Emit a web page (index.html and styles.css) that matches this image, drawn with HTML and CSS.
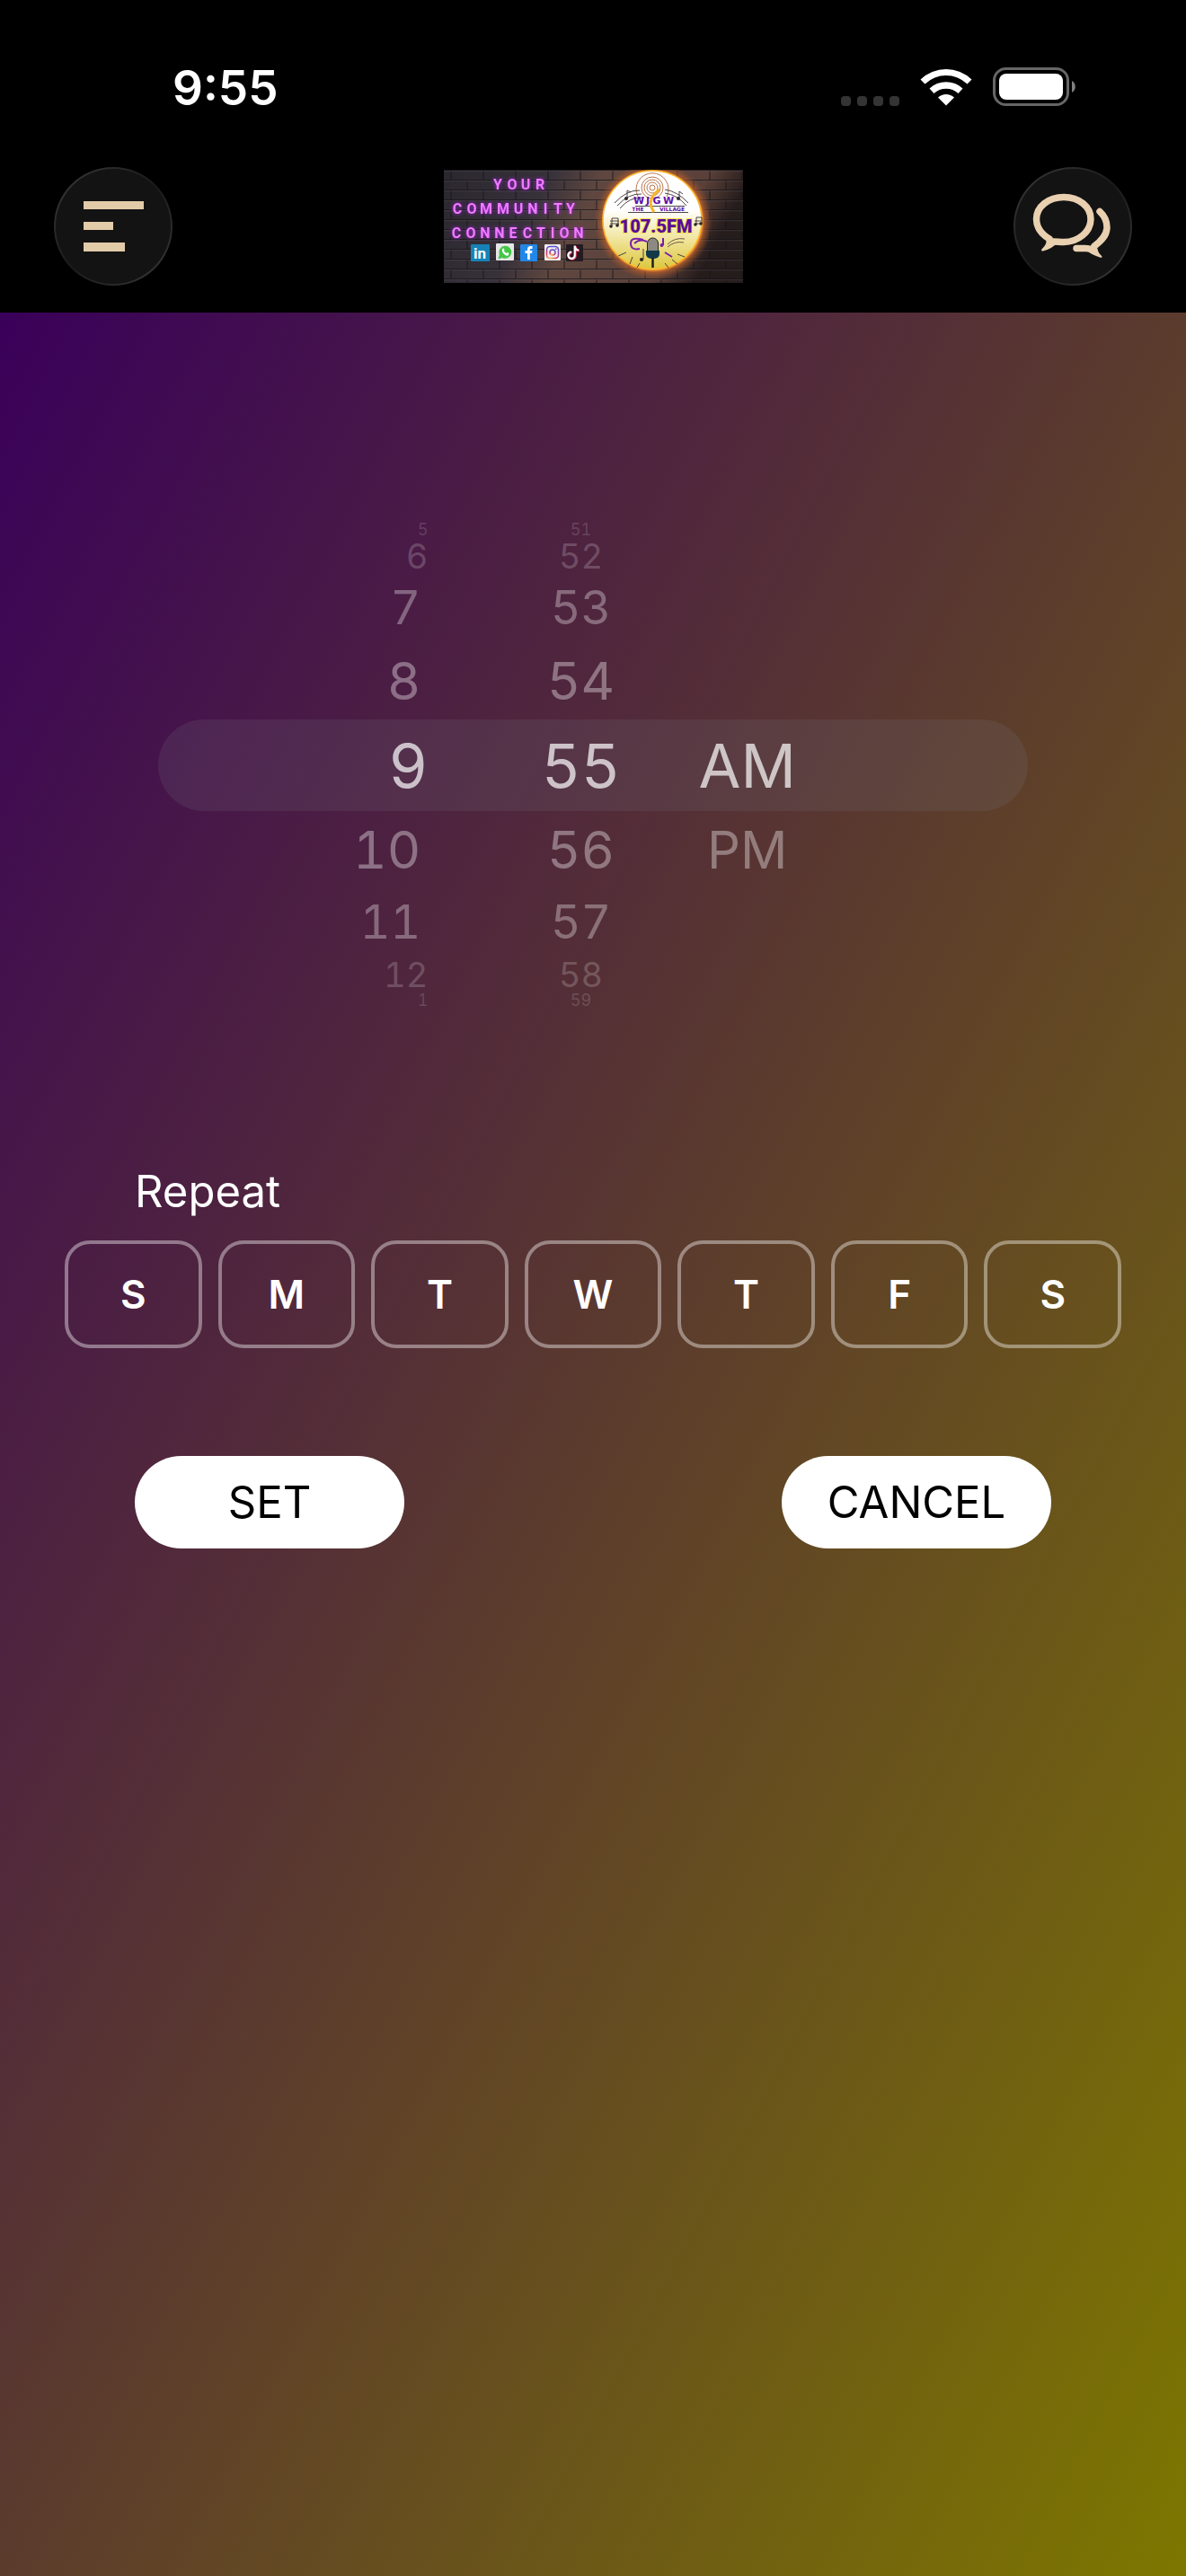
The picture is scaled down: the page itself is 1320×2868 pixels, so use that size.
FILE: index.html
```html
<!DOCTYPE html>
<html lang="en">
<head>
<meta charset="utf-8">
<meta name="viewport" content="width=device-width, initial-scale=1">
<title>Set alarm</title>
<link rel="stylesheet" href="styles.css">
</head>
<body>
<header class="header">
  <div class="status">
    <time class="status-time">9:55</time>
    <div class="status-icons">
      <span class="signal"><i></i><i></i><i></i><i></i></span>
      <svg class="wifi" viewBox="0 0 58 43" aria-hidden="true">
        <path d="M0.500 13.500A41 41 0 0 1 57.500 13.500L52.500 18.500A34 34 0 0 0 5.500 18.500Z"/>
        <path d="M10.500 23.500A27 27 0 0 1 47.500 23.500L42.500 29A20 20 0 0 0 15.500 29Z"/>
        <path d="M20 33.500A13 13 0 0 1 38 33.500L29 42.500Z"/>
      </svg>
      <svg class="battery" viewBox="0 0 94 43" aria-hidden="true">
        <rect x="1.500" y="1.500" width="82" height="40" rx="13" fill="none" stroke="#666" stroke-width="3"/>
        <rect x="7" y="7" width="71" height="29" rx="8" fill="#fff"/>
        <path d="M88 15A7.500 7.500 0 0 1 88 28Z" fill="#808080"/>
      </svg>
    </div>
  </div>
  <nav class="navbar">
    <button class="round" type="button" aria-label="Menu">
      <svg viewBox="0 0 132 132" aria-hidden="true">
        <g fill="#e2cba9"><rect x="33" y="38" width="67" height="9"/><rect x="33" y="61" width="33" height="9"/><rect x="33" y="84" width="46" height="10"/></g>
      </svg>
    </button>
    <svg class="logo" viewBox="0 0 333 126" role="img" aria-label="WJGW The Village 107.5 FM">
      <defs>
        <linearGradient id="wall" x1="0" x2="1" y1="0" y2="0.200">
          <stop offset="0" stop-color="#2a272e"/><stop offset="0.350" stop-color="#37313a"/><stop offset="0.520" stop-color="#5f473f"/><stop offset="0.860" stop-color="#5a4038"/><stop offset="1" stop-color="#251c1c"/>
        </linearGradient>
        <pattern id="bricks" width="36" height="22" patternUnits="userSpaceOnUse">
          <path d="M0 0.500H36M0 11.500H36M8 0V11M26 11V22" stroke="#151318" stroke-width="1.200" fill="none"/>
          <path d="M0 1.700H36M0 12.700H36" stroke="#5a5258" stroke-width="0.500" fill="none"/>
        </pattern>
        <radialGradient id="halo"><stop offset="0.820" stop-color="#ff9d2e"/><stop offset="0.870" stop-color="#c9662a" stop-opacity="0.600"/><stop offset="1" stop-color="#9c4f2c" stop-opacity="0"/></radialGradient>
        <linearGradient id="disc" x1="0" x2="0" y1="0" y2="1"><stop offset="0.400" stop-color="#fff"/><stop offset="0.700" stop-color="#f0e49a"/><stop offset="1" stop-color="#dcc63c"/></linearGradient>
        <radialGradient id="insta" cx="0.300" cy="1" r="1"><stop offset="0" stop-color="#fdc04a"/><stop offset="0.500" stop-color="#e0356c"/><stop offset="1" stop-color="#5a4fd0"/></radialGradient>
      </defs>
      <rect width="333" height="126" fill="url(#wall)"/>
      <rect width="333" height="126" fill="url(#bricks)" opacity="0.700"/>
      <g class="neon">
        <text x="60 76 91 107" y="22">YOUR</text>
        <text x="15 31 47 66 83 99 113 127 141" y="49">COMMUNITY</text>
        <text x="14 30 46 62 77 93 108 121 134 150" y="76">CONNECTION</text>
      </g>
      <rect x="30" y="83" width="21" height="19" rx="1" fill="#1583b7"/>
      <text class="linked" x="40" y="99">in</text>
      <rect x="58" y="82" width="20" height="19" rx="1" fill="#e6e6e6"/>
      <path d="M60.500 99.500L61.800 94.500A7 7 0 1 1 65 98Z" fill="#43c745"/>
      <path d="M65 88Q64 91 67 94T72 95L72.500 93L70.500 92L69.500 93L66.800 90.500L67.500 89.500L66.800 87.500Z" fill="#fff"/>
      <rect x="85" y="83" width="19" height="19" rx="1" fill="#2187e8"/>
      <path d="M93 100V93H90.500V90H93V88.500Q93 85 96.500 85H98.500V88H97Q95.800 88 95.800 89V90H98.500L98 93H95.800V100Z" fill="#fff"/>
      <rect x="112" y="83" width="18" height="18" rx="1" fill="#eee"/>
      <g fill="none" stroke="url(#insta)" stroke-width="1.600"><rect x="114.500" y="85.500" width="13" height="13" rx="3.500"/><circle cx="121" cy="92" r="3"/></g>
      <circle cx="124.800" cy="88.200" r="0.900" fill="#b03ab0"/>
      <rect x="136" y="83" width="19" height="19" rx="1" fill="#251a22"/>
      <path d="M146.500 85V95.500A3.700 3.700 0 1 1 142.800 92M146.500 86Q147.500 90 151 90" fill="none" stroke="#f0345c" stroke-width="2.600"/>
      <path d="M145.700 84.500V95A3.700 3.700 0 1 1 142 91.500M145.700 85.500Q146.500 89.500 150 89.500" fill="none" stroke="#fff" stroke-width="2.200"/>
      <circle cx="233" cy="57" r="66" fill="url(#halo)"/>
      <circle cx="232" cy="56" r="55" fill="url(#disc)" stroke="#ffb52e" stroke-width="1.500"/>
      <g fill="none" stroke="#b9784f" stroke-width="1">
        <circle cx="232" cy="20" r="3"/><circle cx="232" cy="20" r="6"/><circle cx="232" cy="20" r="9"/><circle cx="232" cy="20" r="12"/><path d="M216 30A18 18 0 1 1 248 30"/>
      </g>
      <g fill="none" stroke="#3a3232" stroke-width="0.900">
        <path d="M190 37Q204 22 218 23M193 40Q206 26 220 27M196 43Q207 30 221 31M246 22Q260 24 272 37M246 26Q260 28 270 40"/>
        <path d="M204 32V23L208 25M262 32V24L266 27M187 63V54H194V62M185 57H195M185 60H195M281 61V53H287V60M279 57H286M279 60H286"/>
        <path d="M213 40.500H268M205 47.500H272M210 97L207 105M218 104L215 109M246 104L250 109M254 100L260 105M260 94L268 97M203 92L194 96M222 88V100"/>
      </g>
      <g fill="#2c2424"><circle cx="203" cy="32" r="2"/><circle cx="261" cy="32" r="2"/><circle cx="186" cy="63" r="1.800"/><circle cx="193" cy="62" r="1.800"/><circle cx="280" cy="61" r="1.800"/><circle cx="286" cy="60" r="1.800"/><circle cx="220" cy="100" r="2"/></g>
      <path d="M240 22Q224 34 234 47" fill="none" stroke="#f5b62b" stroke-width="3"/>
      <text class="call" x="217 227 237 250" y="38">WJGW</text>
      <text class="village" y="46"><tspan x="217">THE</tspan> <tspan x="254">VILLAGE</tspan></text>
      <text class="freq" x="236" y="70">107.5FM</text>
      <path d="M222 78Q208 74 208 82T218 88M244 76V84M246 92L254 97M212 82Q218 76 226 80" fill="none" stroke="#7a1fa8" stroke-width="2"/>
      <circle cx="242.500" cy="84" r="2" fill="#7a1fa8"/>
      <path d="M249 83Q257 75 268 77M249 86Q257 79 267 81" fill="none" stroke="#5c4c3c" stroke-width="0.900"/>
      <rect x="226.500" y="76" width="12" height="19" rx="6" fill="#8c8983" stroke="#222" stroke-width="1"/>
      <path d="M225 90H240V94Q240 99 232.500 99T225 94Z" fill="#133a48"/>
      <path d="M232.500 98V109" stroke="#17191c" stroke-width="2.400"/>
    </svg>
    <button class="round" type="button" aria-label="Chat">
      <svg viewBox="0 0 132 132" fill="none" stroke="#e8d0b0" stroke-width="7.500" stroke-linecap="round" stroke-linejoin="round" aria-hidden="true">
        <path d="M40 80C30 74 25.500 67 25.500 58C25.500 44 39 33.500 56 33.500C73 33.500 86 44 86 58C86 72 72 83.500 56 83.500C51 83.500 47 82.500 43 83"/>
        <path d="M36 76Q39 85 31 92Q31 94 33 93.500Q43 91 49 84L40 78Z" fill="#e8d0b0" stroke="none"/>
        <path d="M96 49.500C102 55 104 60 104 67C104 76 98 82 90 88M70 90.500H80C85 90.500 87 92 90 93"/>
        <path d="M86 88L93 82Q91 93 98.500 99.500Q99 101.500 96 100.500Q86 97.500 81 92Z" fill="#e8d0b0" stroke="none"/>
      </svg>
    </button>
  </nav>
</header>
<main class="screen">
  <section class="picker" aria-label="Alarm time">
    <ul class="wheel hours" role="listbox" aria-label="Hour">
      <li class="far4">5</li><li class="far3">6</li><li class="far2">7</li><li class="far1">8</li>
      <li class="current" role="option" aria-selected="true">9</li>
      <li class="far1">10</li><li class="far2">11</li><li class="far3">12</li><li class="far4">1</li>
    </ul>
    <ul class="wheel minutes" role="listbox" aria-label="Minute">
      <li class="far4">51</li><li class="far3">52</li><li class="far2">53</li><li class="far1">54</li>
      <li class="current" role="option" aria-selected="true">55</li>
      <li class="far1">56</li><li class="far2">57</li><li class="far3">58</li><li class="far4">59</li>
    </ul>
    <ul class="wheel period" role="listbox" aria-label="AM or PM">
      <li class="current" role="option" aria-selected="true">AM</li>
      <li class="far1">PM</li>
    </ul>
  </section>
  <section class="repeat" aria-labelledby="repeat-title">
    <h2 class="repeat-title" id="repeat-title">Repeat</h2>
    <div class="days">
      <button class="day" type="button" aria-label="Sunday">S</button>
      <button class="day" type="button" aria-label="Monday">M</button>
      <button class="day" type="button" aria-label="Tuesday">T</button>
      <button class="day" type="button" aria-label="Wednesday">W</button>
      <button class="day" type="button" aria-label="Thursday">T</button>
      <button class="day" type="button" aria-label="Friday">F</button>
      <button class="day" type="button" aria-label="Saturday">S</button>
    </div>
  </section>
  <div class="actions">
    <button class="pill" type="button">SET</button>
    <button class="pill" type="button">CANCEL</button>
  </div>
</main>
</body>
</html>
```
FILE: styles.css
```css
* { box-sizing: border-box; }

body {
  margin: 0;
  min-height: 100vh;
  display: flex;
  flex-direction: column;
  background: #000;
  color: #fff;
  font-family: Inter, "Liberation Sans", sans-serif;
}

button {
  margin: 0;
  padding: 0;
  border: 0;
  font: inherit;
  color: inherit;
  background: none;
}

/* Status bar and navigation */
.header { padding: 66px 60px 30px; }

.status {
  display: flex;
  justify-content: space-between;
  align-items: center;
  height: 64px;
  padding: 0 61px 0 132px;
}

.status-time { font-size: 53px; font-weight: 600; line-height: 64px; }

.status-icons { display: flex; align-items: center; gap: 23px; padding-bottom: 3px; }

.signal { display: flex; gap: 7px; align-self: flex-end; }
.signal i { width: 11px; height: 11px; border-radius: 4px; background: #343434; }
.wifi { width: 58px; height: 43px; fill: #fff; }
.battery { width: 94px; height: 43px; }

.navbar {
  display: flex;
  justify-content: space-between;
  align-items: center;
  margin-top: 56px;
}

.round {
  width: 132px;
  height: 132px;
  border: 2px solid transparent;
  border-radius: 50%;
  background:
    linear-gradient(#131313, #131313) padding-box,
    linear-gradient(135deg, #3a3a3a, #1a1a1a 50%, #3a3a3a) border-box;
}
.round svg { display: block; margin: -2px; width: 132px; height: 132px; }

.logo { width: 333px; height: 126px; }
.logo text { text-anchor: middle; font-family: Roboto, sans-serif; font-weight: 700; }
.neon text {
  font-size: 16px;
  fill: #f07cff;
  filter: drop-shadow(0 0 2px #b020f0);
}
.logo .linked { font-size: 17px; fill: #fff; }
.logo .call { font-family: "DejaVu Sans", sans-serif; font-size: 11px; fill: #5f12a6; }
.logo .village { font-family: "DejaVu Sans", sans-serif; font-size: 6px; fill: #5f12a6; }
.logo .freq {
  font-size: 20px;
  font-weight: 900;
  fill: #5a0a9c;
  stroke: #f2e24a;
  stroke-width: 2px;
  paint-order: stroke;
}

/* Alarm form */
.screen {
  flex: 1;
  padding: 233px 72px 96px;
  background: linear-gradient(to bottom right, #3a005a, #7d7700);
}

.picker {
  display: grid;
  grid-template-columns: 300fr 60fr 220fr 150fr 237fr;
  align-items: center;
  margin: 0 104px;
  font-variant-numeric: tabular-nums;
}
/* Band behind the selected row */
.picker::before {
  content: "";
  grid-area: 1 / 1 / 2 / -1;
  height: 102px;
  border-radius: 51px;
  background: rgb(118 118 128 / 18%);
}

.wheel { grid-row: 1; margin: 0; padding: 0; list-style: none; text-align: center; }
.hours { grid-column: 1; text-align: right; }
.minutes { grid-column: 3; }
.period { grid-column: 4; padding-top: 86px; }

.current { font-size: 68px; line-height: 102px; color: rgb(255 255 255 / 70%); }
.far1 { font-size: 58px; line-height: 86px; color: rgb(255 255 255 / 36%); }
.far2 { font-size: 52px; line-height: 76px; color: rgb(255 255 255 / 32%); }
.far3 { font-size: 38px; line-height: 40px; color: rgb(255 255 255 / 20%); }
.far4 { font-size: 18px; line-height: 18px; color: rgb(255 255 255 / 16%); }
.hours .far1, .hours .far2 { padding-right: 8px; }

.repeat { margin-top: 172px; }
.repeat-title {
  margin: 0;
  padding: 0 78px;
  font-size: 49px;
  font-weight: 400;
  line-height: 64px;
}

.days { display: flex; gap: 18px; margin-top: 22px; }
.day {
  flex: 1;
  height: 120px;
  border: 4px solid rgb(255 255 255 / 40%);
  border-radius: 28px;
  font-size: 44px;
  font-weight: 600;
}

.actions {
  display: flex;
  justify-content: space-between;
  margin-top: 120px;
  padding: 0 78px;
}
.pill {
  width: 300px;
  height: 103px;
  border-radius: 52px;
  background: #fff;
  color: #000;
  font-size: 49px;
}
```
